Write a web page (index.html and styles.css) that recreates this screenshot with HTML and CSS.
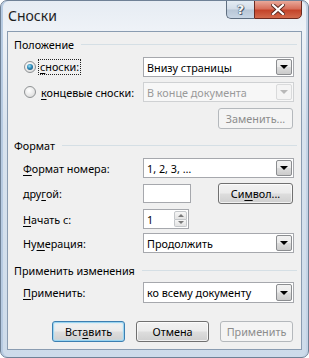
FILE: index.html
```html
<!DOCTYPE html>
<html lang="ru">
<head>
<meta charset="utf-8">
<title>Сноски</title>
<link rel="stylesheet" href="styles.css">
</head>
<body>
<div class="window">
  <div class="titlebar">
    <span class="title">Сноски</span>
    <div class="caption-btns">
      <div class="cap help">?</div>
      <div class="cap close">
        <svg width="14" height="11" viewBox="0 0 14 11"><path d="M2 1 L12 10 M12 1 L2 10" stroke="#5a2a22" stroke-width="4" stroke-linecap="square"/><path d="M2 1 L12 10 M12 1 L2 10" stroke="#fff" stroke-width="2.2" stroke-linecap="square"/></svg>
      </div>
    </div>
  </div>
  <div class="client">
    <div class="group g1"><span class="group-title">Положение</span><span class="group-line"></span></div>

    <div class="row r1">
      <div class="label radio-label"><span class="radio checked"></span><span class="focus"><u>с</u>носки:</span></div>
      <div class="combo"><span class="combo-text">Внизу страницы</span><span class="arrow"><i></i></span></div>
    </div>
    <div class="row r2">
      <div class="label radio-label"><span class="radio"></span><span class="rtext"><u>к</u>онцевые сноски:</span></div>
      <div class="combo disabled"><span class="combo-text">В конце документа</span><span class="arrow"><i></i></span></div>
    </div>
    <div class="row r3 right">
      <button class="btn disabled wide">Заменить...</button>
    </div>

    <div class="group g2"><span class="group-title">Формат</span><span class="group-line"></span></div>

    <div class="row r4">
      <div class="label"><u>Ф</u>ормат номера:</div>
      <div class="combo"><span class="combo-text">1, 2, 3, …</span><span class="arrow"><i></i></span></div>
    </div>
    <div class="row r5">
      <div class="label">дру<u>г</u>ой:</div>
      <div class="textbox"></div>
      <button class="btn wide sym">Си<u>м</u>вол...</button>
    </div>
    <div class="row r6">
      <div class="label"><u>Н</u>ачать с:</div>
      <div class="spinner"><span class="spin-text">1</span><span class="spin-btns"><span class="spin up"><i></i></span><span class="spin down"><i></i></span></span></div>
    </div>
    <div class="row r7">
      <div class="label">Ну<u>м</u>ерация:</div>
      <div class="combo"><span class="combo-text">Продолжить</span><span class="arrow"><i></i></span></div>
    </div>

    <div class="group g3"><span class="group-title">Применить изменения</span><span class="group-line"></span></div>

    <div class="row r8">
      <div class="label"><u>П</u>рименить:</div>
      <div class="combo"><span class="combo-text">ко всему документу</span><span class="arrow"><i></i></span></div>
    </div>

    <div class="buttons">
      <button class="btn default">Вст<u>а</u>вить</button>
      <button class="btn">Отмена</button>
      <button class="btn disabled">Применить</button>
    </div>
  </div>
</div>
</body>
</html>
```

FILE: styles.css
```css
* { box-sizing: border-box; }
html, body { margin: 0; padding: 0; background: #ffffff; }
body { font-family: "Noto Sans", "Open Sans", sans-serif; font-size: 10.8px; color: #000; }
u { text-decoration: underline; text-underline-offset: 2px; text-decoration-thickness: 1px; }

.window {
  width: 309px; height: 358px;
  border: 1px solid #6f8196;
  border-radius: 7px;
  background: linear-gradient(180deg, #e6ecf3 0%, #eef2f7 8%, #d9e3ee 35%, #cddbea 100%);
  padding: 0 6px 7px 6px;
  display: flex; flex-direction: column;
  overflow: hidden;
  box-shadow: inset 2px 0 0 #b7cbe2, inset -2px 0 0 #c3d3e6;
}
.titlebar { height: 30px; display: flex; align-items: flex-start; }
.title { margin-top: 5px; margin-left: 1px; font-size: 14px; color: #1e1e1e; }
.caption-btns { margin-left: auto; display: flex; margin-top: -1px; margin-right: 0; }
.cap { height: 19px; display: flex; align-items: center; justify-content: center; border: 1px solid #5f6e80; }
.help {
  width: 28px; border-right: none; border-radius: 0 0 0 5px;
  background: linear-gradient(180deg, #e4ecf4 0%, #d2dce8 48%, #b8c6d6 52%, #c8d6e5 100%);
  color: #f4f6f8; font-weight: bold; font-size: 13px; font-family: "DejaVu Sans", sans-serif;
  text-shadow: 0 0 1px #3c4756, 0 0 1px #3c4756, 1px 1px 0 #56657a;
}
.close {
  width: 48px; border-radius: 0 0 5px 0; border-color: #6c2a20;
  background: linear-gradient(180deg, #e9a99a 0%, #d7705c 45%, #c4442a 55%, #d26a4c 100%);
}

.client {
  flex: 1;
  background: #f0f0f0;
  border: 1px solid #8a9cb1;
  padding: 0;
  display: flex; flex-direction: column;
}
.group { display: flex; align-items: center; height: 16px; padding-left: 6px; padding-right: 4px; }
.group-title { white-space: nowrap; }
.group-line { flex: 1; height: 0; border-top: 1px solid #d5dfe5; margin-left: 7px; }
.g1 { margin-top: 4px; }
.g2 { margin-top: 8px; }
.g3 { margin-top: 9px; }

.row { display: flex; align-items: center; height: 20px; margin-top: 5px; padding-right: 7px; }
.row.right { justify-content: flex-end; height: 22px; padding-right: 8px; }
.r5 { height: 21px; }
.r7 { margin-top: 4px; }
.r8 { margin-top: 4px; height: 21px; }
.label { width: 135px; padding-left: 15px; white-space: nowrap; flex-shrink: 0; }
.radio-label { display: flex; align-items: center; padding-left: 16px; }
.radio {
  width: 12px; height: 12px; border-radius: 50%;
  border: 1px solid #8f9294;
  background: radial-gradient(circle at 40% 35%, #ffffff 0%, #e6e6e6 60%, #cfcfcf 100%);
  margin-right: 3px; flex-shrink: 0; position: relative;
}
.radio.checked::after {
  content: ""; position: absolute; left: 2px; top: 2px; width: 6px; height: 6px; border-radius: 50%;
  background: radial-gradient(circle at 40% 35%, #9fe0f5 0%, #2c8ab8 45%, #0f3e63 100%);
}
.focus { outline: 1px dotted #222; outline-offset: 0; padding: 1px; line-height: 12px; }
.rtext { padding-left: 2px; }

.combo {
  flex: 1; height: 100%;
  border: 1px solid #a6a8ad; background: #fff;
  display: flex; align-items: stretch;
}
.combo-text { flex: 1; padding-left: 3px; display: flex; align-items: center; white-space: nowrap; }
.arrow {
  width: 16px; margin: 1px;
  border: 1px solid #8b8d90; border-radius: 2px;
  background: linear-gradient(180deg, #f2f2f2 0%, #ebebeb 48%, #dcdcdc 52%, #cbcbcb 100%);
  display: flex; align-items: center; justify-content: center;
}
.arrow i { width: 0; height: 0; border-left: 4px solid transparent; border-right: 4px solid transparent; border-top: 4px solid #000; }
.combo.disabled { border-color: #cfd1d3; background: #f7f7f7; color: #9a9a9a; }
.combo.disabled .arrow { border-color: #d9dadb; background: #f4f4f4; }
.combo.disabled .arrow i { border-top-color: #b8b8b8; }

.textbox { width: 48px; height: 19px; border: 1px solid #a6a8ad; background: #fff; }
.sym { margin-left: auto; margin-right: 1px; }

.spinner { width: 46px; height: 20px; border: 1px solid #a6a8ad; background: #fff; display: flex; }
.spin-text { flex: 1; padding-left: 3px; display: flex; align-items: center; }
.spin-btns { width: 13px; display: flex; flex-direction: column; margin: 1px 1px 1px 0; }
.spin { flex: 1; border: 1px solid #c4c7ca; background: linear-gradient(180deg, #f6f6f6, #e3e3e3); display: flex; align-items: center; justify-content: center; }
.spin.up { border-radius: 2px 2px 0 0; }
.spin.down { border-radius: 0 0 2px 2px; border-top: none; }
.spin.up i { border-left: 3px solid transparent; border-right: 3px solid transparent; border-bottom: 3px solid #7a7a7a; }
.spin.down i { border-left: 3px solid transparent; border-right: 3px solid transparent; border-top: 3px solid #7a7a7a; }

.btn {
  width: 73px; height: 21px;
  font-family: inherit; font-size: 10.8px; color: #000;
  border: 1px solid #707070; border-radius: 3px;
  background: linear-gradient(180deg, #f2f2f2 0%, #ebebeb 48%, #dddddd 52%, #cfcfcf 100%);
  box-shadow: inset 0 0 0 1px rgba(255,255,255,0.7);
  padding: 0; display: flex; align-items: center; justify-content: center;
}
.btn.wide { width: 75px; }
.btn.disabled { border-color: #b4b8bc; background: #f4f4f4; color: #8c8c8c; box-shadow: none; }
.btn.default { border-color: #3c7fb1; box-shadow: inset 0 0 0 1px #9ad4f0, inset 0 0 2px 1px #b8e4f8; }

.buttons { display: flex; justify-content: flex-end; gap: 11px; margin-top: 18px; padding-right: 8px; }
```
